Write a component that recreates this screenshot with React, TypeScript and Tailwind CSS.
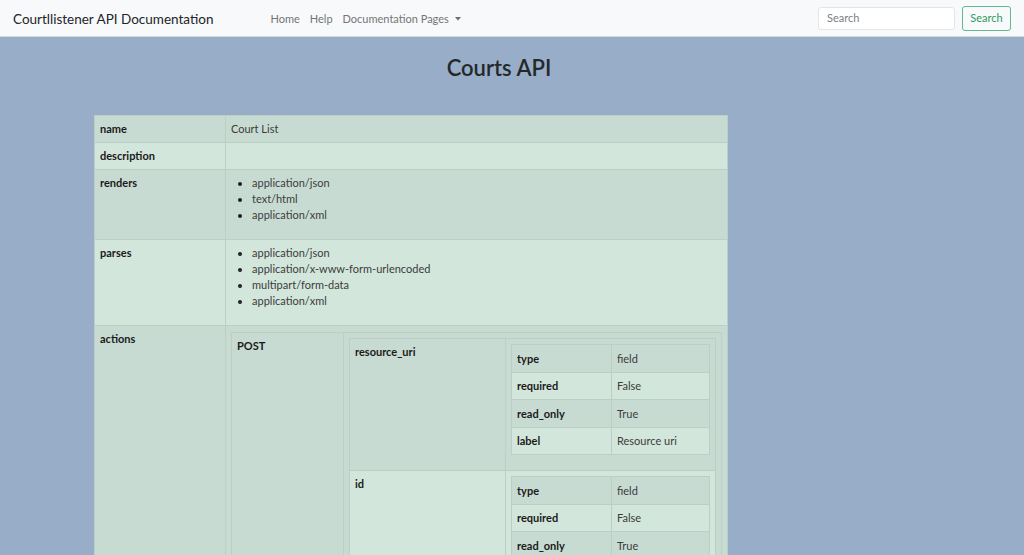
import React from "react";

const font = { fontFamily: "Lato, 'Open Sans', 'Liberation Sans', sans-serif" };

const dark = "bg-[#c8dbd2]";
const light = "bg-[#d2e6dc]";
const cell = "border border-[#bccfc5] px-[5px] py-[5px] align-top text-left";
const key = `${cell} font-bold text-[#1a1a1a]`;
const val = `${cell} text-[#3b3b3b]`;
const icell = "border border-[#bccfc5] px-[5px] pt-[5.5px] pb-[5px] align-top text-left";
const ikey = `${icell} font-bold text-[#1a1a1a]`;
const ival = `${icell} text-[#3b3b3b]`;

function Bullets({ items }: { items: string[] }) {
  return (
    <ul className="list-disc pl-[21px] mb-[11px] marker:text-[#222]">
      {items.map((i) => (
        <li key={i}>{i}</li>
      ))}
    </ul>
  );
}

function FieldTable({ rows }: { rows: [string, string][] }) {
  return (
    <table className="w-[199px] border-collapse mb-[10px]">
      <colgroup>
        <col className="w-[100px]" />
        <col />
      </colgroup>
      <tbody>
        {rows.map(([k, v], i) => (
          <tr key={k} className={i % 2 === 0 ? dark : light}>
            <td className={ikey}>{k}</td>
            <td className={ival}>{v}</td>
          </tr>
        ))}
      </tbody>
    </table>
  );
}

export default function App() {
  const fields: { name: string; rows: [string, string][] }[] = [
    {
      name: "resource_uri",
      rows: [
        ["type", "field"],
        ["required", "False"],
        ["read_only", "True"],
        ["label", "Resource uri"],
      ],
    },
    {
      name: "id",
      rows: [
        ["type", "field"],
        ["required", "False"],
        ["read_only", "True"],
        ["label", "Id"],
      ],
    },
    {
      name: "date_modified",
      rows: [
        ["type", "datetime"],
        ["required", "False"],
        ["read_only", "True"],
        ["label", "Date modified"],
      ],
    },
  ];

  return (
    <div className="min-h-screen bg-[#98aec8] text-[11px] leading-[16px]" style={font}>
      <nav className="h-[37px] flex items-center bg-[#f8f9fa] border-b border-[#d3d9df] pl-[13px] pr-[13px]">
        <span className="text-[13.5px] text-[#212529] whitespace-nowrap pt-[1px]">Courtllistener API Documentation</span>
        <div className="flex items-center ml-[57px] text-[11px] text-[#737576] gap-[10px] pt-[1px]">
          <span>Home</span>
          <span>Help</span>
          <span className="flex items-center gap-[6px]">
            Documentation Pages
            <svg width="6" height="4" viewBox="0 0 6 4" className="mt-[1px]">
              <path d="M0 0 L6 0 L3 3.5 Z" fill="#6b6d6f" />
            </svg>
          </span>
        </div>
        <div className="ml-auto flex items-center gap-[7px]">
          <div className="w-[137px] h-[23px] bg-white border border-[#e3e6e9] rounded-[3px] flex items-center pl-[8px] text-[11px] text-[#7b7f83]">
            Search
          </div>
          <div className="w-[49px] h-[25px] border border-[#62b98e] rounded-[3px] flex items-center justify-center text-[11px] text-[#2f9a64]">
            Search
          </div>
        </div>
      </nav>

      <h1 className="text-center pr-[26px] mt-[18px] text-[22px] leading-[26px] font-semibold text-[#25282b]">
        Courts API
      </h1>

      <table className="ml-[94px] mt-[34px] w-[634px] border-collapse">
        <colgroup>
          <col className="w-[131px]" />
          <col />
        </colgroup>
        <tbody>
          <tr className={dark}>
            <td className={key}>name</td>
            <td className={val}>Court List</td>
          </tr>
          <tr className={light}>
            <td className={key}>description</td>
            <td className={val}></td>
          </tr>
          <tr className={dark}>
            <td className={key}>renders</td>
            <td className={val}>
              <Bullets items={["application/json", "text/html", "application/xml"]} />
            </td>
          </tr>
          <tr className={light}>
            <td className={key}>parses</td>
            <td className={val}>
              <Bullets
                items={[
                  "application/json",
                  "application/x-www-form-urlencoded",
                  "multipart/form-data",
                  "application/xml",
                ]}
              />
            </td>
          </tr>
          <tr className={dark}>
            <td className={key}>actions</td>
            <td className={`${val} pt-[6px]`}>
              <table className="w-[491px] border-collapse mb-[12px]">
                <colgroup>
                  <col className="w-[112px]" />
                  <col />
                </colgroup>
                <tbody>
                  <tr className={dark}>
                    <td className={key}>POST</td>
                    <td className={val}>
                      <table className="w-[367px] border-collapse mb-[12px]">
                        <colgroup>
                          <col className="w-[156px]" />
                          <col />
                        </colgroup>
                        <tbody>
                          {fields.map((f, i) => (
                            <tr key={f.name} className={i % 2 === 0 ? dark : light}>
                              <td className={key}>{f.name}</td>
                              <td className={val}>
                                <FieldTable rows={f.rows} />
                              </td>
                            </tr>
                          ))}
                        </tbody>
                      </table>
                    </td>
                  </tr>
                </tbody>
              </table>
            </td>
          </tr>
        </tbody>
      </table>
    </div>
  );
}
